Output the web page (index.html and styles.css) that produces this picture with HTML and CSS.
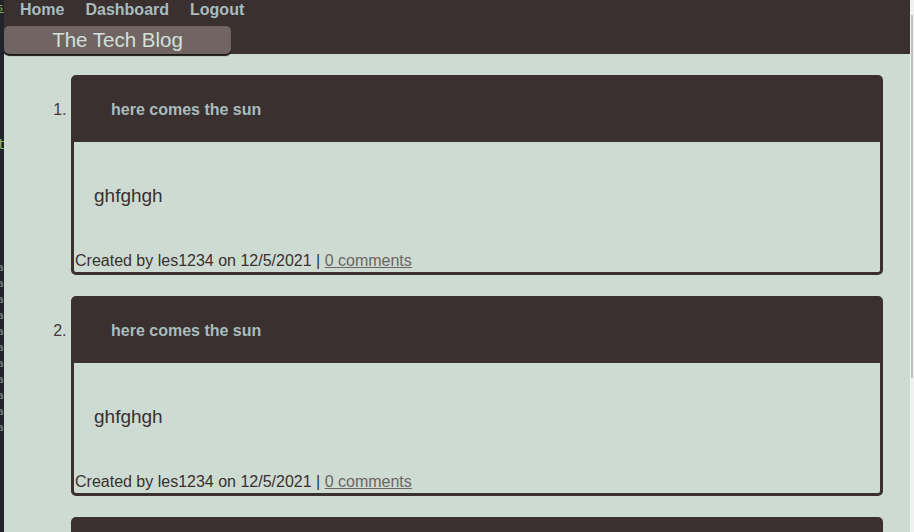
FILE: index.html
```html
<!DOCTYPE html>
<html lang="en">
<head>
<meta charset="utf-8">
<title>The Tech Blog</title>
<link rel="stylesheet" href="styles.css">
</head>
<body>
<div class="window">
  <div class="side-strip">
    <span class="frag frag-s">s</span>
    <span class="frag frag-t">t</span>
    <span class="frag frag-g f1">a</span>
    <span class="frag frag-g">a</span>
    <span class="frag frag-g">a</span>
    <span class="frag frag-g">a</span>
    <span class="frag frag-g">a</span>
    <span class="frag frag-g">a</span>
    <span class="frag frag-g">a</span>
    <span class="frag frag-g">a</span>
    <span class="frag frag-g">a</span>
    <span class="frag frag-g">a</span>
    <span class="frag frag-g">a</span>
  </div>
  <div class="page">
    <header class="site-header">
      <nav class="nav">
        <a href="#" class="nav-link">Home</a>
        <a href="#" class="nav-link">Dashboard</a>
        <a href="#" class="nav-link">Logout</a>
      </nav>
      <div class="brand">The Tech Blog</div>
    </header>
    <main class="content">
      <ol class="post-list">
        <li class="post-item">
          <article class="post">
            <div class="post-head"><h2 class="post-title">here comes the sun</h2></div>
            <div class="post-body">
              <p class="post-text">ghfghgh</p>
              <p class="post-meta">Created by les1234 on 12/5/2021 | <a href="#" class="comments">0 comments</a></p>
            </div>
          </article>
        </li>
        <li class="post-item">
          <article class="post">
            <div class="post-head"><h2 class="post-title">here comes the sun</h2></div>
            <div class="post-body">
              <p class="post-text">ghfghgh</p>
              <p class="post-meta">Created by les1234 on 12/5/2021 | <a href="#" class="comments">0 comments</a></p>
            </div>
          </article>
        </li>
        <li class="post-item">
          <article class="post">
            <div class="post-head"><h2 class="post-title">here comes the sun</h2></div>
            <div class="post-body">
              <p class="post-text">ghfghgh</p>
              <p class="post-meta">Created by les1234 on 12/5/2021 | <a href="#" class="comments">0 comments</a></p>
            </div>
          </article>
        </li>
      </ol>
    </main>
  </div>
  <div class="scrollbar"><div class="thumb"></div></div>
</div>
</body>
</html>
```

FILE: styles.css
```css
html, body {
  margin: 0;
  padding: 0;
  height: 100%;
  overflow: hidden;
}

body {
  font-family: "Liberation Sans", Arial, sans-serif;
  background: #cddbd3;
}

.window {
  display: flex;
  height: 532px;
  width: 914px;
}

.side-strip {
  width: 4px;
  flex: none;
  background: #21252b;
  display: flex;
  flex-direction: column;
  overflow: hidden;
}

.frag {
  display: block;
  font-family: "DejaVu Sans Mono", monospace;
  font-size: 11px;
  line-height: 16px;
  height: 16px;
  margin-left: -3px;
  width: 7px;
  overflow: hidden;
}

.frag-s {
  color: #7fb35a;
  text-decoration: underline;
}

.frag-t {
  color: #8fb86a;
  margin-top: 120px;
  font-size: 14px;
}

.frag-g {
  color: #8c9096;
}

.f1 {
  margin-top: 108px;
}

.page {
  flex: 1;
  min-width: 0;
  background: #cddbd3;
  overflow: hidden;
}

.site-header {
  background: #3a302f;
  height: 54px;
}

.nav {
  display: flex;
  gap: 21px;
  padding-left: 16px;
  padding-top: 1px;
  height: 17px;
}

.nav-link {
  color: #a9bcbf;
  font-weight: bold;
  font-size: 16px;
  line-height: 18px;
  text-decoration: none;
}

.brand {
  margin-top: 8px;
  width: 227px;
  height: 28px;
  line-height: 28px;
  background: #706563;
  color: #d3e0dc;
  font-size: 20.5px;
  text-align: center;
  border-radius: 5px;
  box-shadow: 0 2px 1px #1c1716;
  position: relative;
}

.content {
  padding: 0;
}

.post-list {
  margin: 21px 27px 0 27px;
  padding-left: 40px;
  color: #3a302f;
  font-size: 16px;
}

.post-item {
  margin-bottom: 21px;
}

.post-item::marker {
  color: #4a3534;
}

.post {
  border: 3px solid #3a302f;
  border-radius: 5px;
  height: 200px;
  box-sizing: border-box;
  display: flex;
  flex-direction: column;
}

.post-head {
  background: #3a302f;
  height: 64px;
  display: flex;
  align-items: center;
  padding-left: 37px;
}

.post-title {
  margin: 0;
  font-size: 16px;
  font-weight: bold;
  color: #a9bcbf;
  line-height: 18px;
}

.post-body {
  flex: 1;
  display: flex;
  flex-direction: column;
}

.post-text {
  margin: 43px 0 0 20px;
  font-size: 19px;
  line-height: 22px;
  color: #3a302f;
}

.post-meta {
  margin: 45px 0 0 1px;
  font-size: 16px;
  line-height: 18px;
  color: #3a302f;
}

.comments {
  color: #6b6565;
  text-decoration: underline;
}

.scrollbar {
  width: 4px;
  flex: none;
  background: #f1f1f1;
  padding-top: 15px;
  box-sizing: border-box;
}

.thumb {
  width: 2px;
  margin-left: 1px;
  height: 363px;
  background: #c1c1c1;
}
```
